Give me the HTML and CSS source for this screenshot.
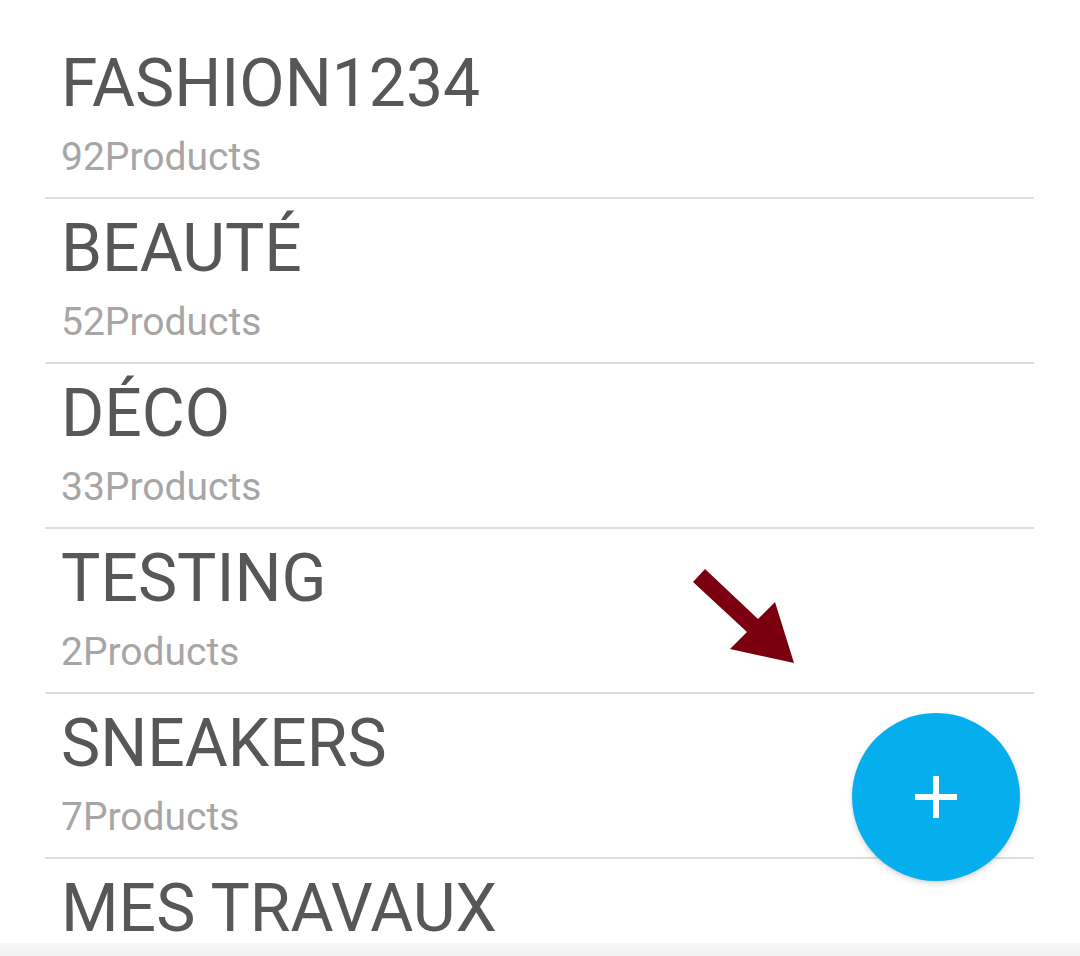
FILE: index.html
```html
<!DOCTYPE html>
<html>
<head>
<meta charset="utf-8">
<link rel="stylesheet" href="styles.css">
</head>
<body>
<div class="screen">
  <ul class="list">
    <li class="row"><div class="title">FASHION1234</div><div class="sub">92Products</div></li>
    <li class="row"><div class="title">BEAUTÉ</div><div class="sub">52Products</div></li>
    <li class="row"><div class="title">DÉCO</div><div class="sub">33Products</div></li>
    <li class="row"><div class="title">TESTING</div><div class="sub">2Products</div></li>
    <li class="row"><div class="title">SNEAKERS</div><div class="sub">7Products</div></li>
    <li class="row"><div class="title">MES TRAVAUX</div></li>
  </ul>
  <div class="bottom-bar"></div>
  <svg class="arrow" width="1080" height="956" viewBox="0 0 1080 956">
    <polygon points="693,582 705,569 758,619 775,602 794,663 730,649 747,632" fill="#7a0010"/>
  </svg>
  <button class="fab" aria-label="Add">
    <span class="plus-h"></span><span class="plus-v"></span>
  </button>
</div>
</body>
</html>
```
FILE: styles.css
```css
html, body {
  margin: 0;
  padding: 0;
  background: #ffffff;
}
.screen {
  position: relative;
  width: 1080px;
  height: 956px;
  overflow: hidden;
  font-family: Roboto, "Noto Sans", sans-serif;
}
.list {
  list-style: none;
  margin: 34px 46px 0 45px;
  padding: 0;
}
.row {
  padding: 10px 0 16px 16px;
  border-bottom: 2px solid #dedede;
}
.title {
  font-size: 66px;
  line-height: 80px;
  color: #575757;
}
.sub {
  margin-top: 9px;
  font-size: 39px;
  line-height: 48px;
  color: #a6a6a6;
}
.bottom-bar {
  position: absolute;
  left: 0;
  right: 0;
  bottom: 0;
  height: 13px;
  background: linear-gradient(#f7f7f7, #f2f2f2);
}
.arrow {
  position: absolute;
  left: 0;
  top: 0;
  pointer-events: none;
}
.fab {
  position: absolute;
  left: 852px;
  top: 713px;
  width: 168px;
  height: 168px;
  border-radius: 50%;
  border: none;
  padding: 0;
  background: #05aeec;
  box-shadow: 0 3px 6px rgba(0,0,0,0.12), 0 1px 3px rgba(0,0,0,0.08);
}
.plus-h, .plus-v {
  position: absolute;
  background: #ffffff;
}
.plus-h {
  left: 63px;
  top: 81px;
  width: 42px;
  height: 6px;
}
.plus-v {
  left: 81px;
  top: 63px;
  width: 6px;
  height: 42px;
}
```
